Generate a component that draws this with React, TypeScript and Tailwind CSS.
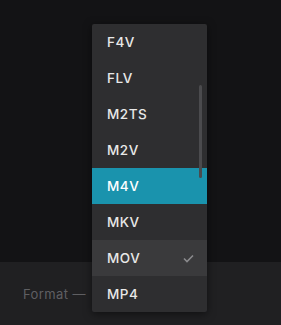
const formats = ["F4V", "FLV", "M2TS", "M2V", "M4V", "MKV", "MOV", "MP4"];

const App: React.FC = () => {
    const active = "M4V";
    const selected = "MOV";
    return (
        <div className="relative flex h-[325px] w-[281px] flex-col overflow-hidden bg-[#131315] font-['Inter',sans-serif]">
            <div className="h-[262px] shrink-0" />
            <div className="flex flex-1 items-center bg-[#202022] pl-[23px] pt-[2px]">
                <span className="text-[13px] tracking-[0.4px] text-[#5f5f62]">Format —</span>
            </div>

            <div className="absolute left-[92px] top-[24px] w-[115px] rounded-[2px] bg-[#2e2e30] shadow-[0_2px_8px_rgba(0,0,0,0.5)]">
                {formats.map((f) => (
                    <div
                        key={f}
                        className={`flex h-[36px] items-center justify-between pl-[15px] pr-[13px] text-[13.5px] font-medium tracking-[0.5px] ${
                            f === active
                                ? "bg-[#1a93ad] text-white"
                                : f === selected
                                  ? "bg-[#3a3a3c] text-[#e8e8e8]"
                                  : "text-[#e8e8e8]"
                        }`}
                    >
                        <span>{f}</span>
                        {f === selected && (
                            <svg width="11" height="9" viewBox="0 0 11 9" fill="none">
                                <path d="M1 4.5L4 7.5L10 1.5" stroke="#8a8a8d" strokeWidth="1.6" />
                            </svg>
                        )}
                    </div>
                ))}
                <div className="absolute left-[107px] top-[61px] h-[93px] w-[3px] rounded-full bg-[#4b4b4e]" />
            </div>
        </div>
    );
};

export default App;
